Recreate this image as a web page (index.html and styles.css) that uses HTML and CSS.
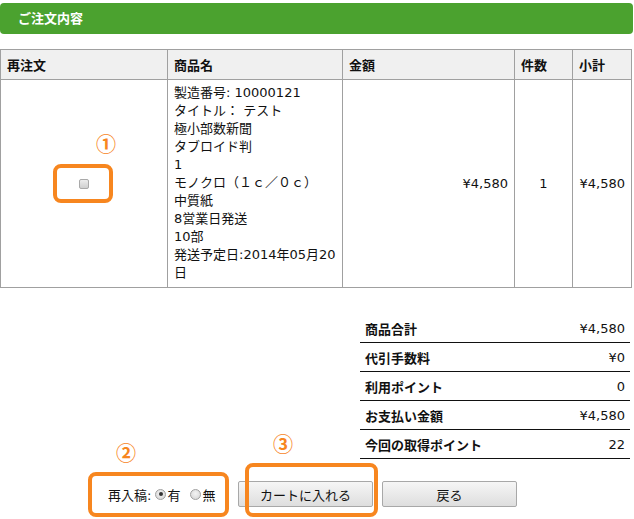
FILE: index.html
```html
<!DOCTYPE html>
<html lang="ja">
<head>
<meta charset="utf-8">
<link rel="stylesheet" href="styles.css">
</head>
<body>
<div class="bar">ご注文内容</div>

<table class="order">
  <colgroup>
    <col class="c1"><col class="c2"><col class="c3"><col class="c4"><col class="c5">
  </colgroup>
  <thead>
    <tr><th>再注文</th><th>商品名</th><th>金額</th><th>件数</th><th>小計</th></tr>
  </thead>
  <tbody>
    <tr>
      <td class="center"><input type="checkbox" class="chk"></td>
      <td class="name">製造番号: 10000121<br>タイトル： テスト<br>極小部数新聞<br>タブロイド判<br>1<br>モノクロ（１ｃ／０ｃ）<br>中質紙<br>8営業日発送<br>10部<br>発送予定日:2014年05月20日</td>
      <td class="right">¥4,580</td>
      <td class="center">1</td>
      <td class="right">¥4,580</td>
    </tr>
  </tbody>
</table>

<table class="summary">
  <tr><th>商品合計</th><td>¥4,580</td></tr>
  <tr><th>代引手数料</th><td>¥0</td></tr>
  <tr><th>利用ポイント</th><td>0</td></tr>
  <tr><th>お支払い金額</th><td>¥4,580</td></tr>
  <tr><th>今回の取得ポイント</th><td>22</td></tr>
</table>

<div class="actions">
  <div class="reupload">
    <span>再入稿:</span>
    <label><input type="radio" class="radio" name="re" checked>有</label>
    <label><input type="radio" class="radio" name="re">無</label>
  </div>
  <button class="btn">カートに入れる</button>
  <button class="btn">戻る</button>
</div>

<div class="note n1">①</div>
<div class="frame f1"></div>
<div class="note n2">②</div>
<div class="frame f2"></div>
<div class="note n3">③</div>
<div class="frame f3"></div>
</body>
</html>
```

FILE: styles.css
```css
html, body {
  margin: 0;
  padding: 0;
  background: #fff;
}
body {
  position: relative;
  width: 634px;
  height: 519px;
  overflow: hidden;
  padding-top: 3px;
  box-sizing: border-box;
  font-family: "DejaVu Sans", "Noto Sans CJK JP", sans-serif;
  font-size: 13px;
  color: #111;
}
.bar {
  width: 633px;
  height: 31px;
  box-sizing: border-box;
  background: #4ba22f;
  border-radius: 4px;
  color: #fff;
  font-weight: bold;
  font-size: 13px;
  line-height: 31px;
  padding-left: 18px;
}
.order {
  margin-top: 15px;
  border-collapse: collapse;
  table-layout: fixed;
  width: 631px;
}
.c1 { width: 167px; }
.c2 { width: 175px; }
.c3 { width: 172px; }
.c4 { width: 58px; }
.c5 { width: 59px; }
.order th, .order td {
  border: 1px solid #a0a0a0;
  padding: 0 6px;
}
.order th {
  background: #f0f0f0;
  text-align: left;
  font-weight: bold;
  height: 29px;
}
.order td {
  vertical-align: middle;
  line-height: 18px;
}
.order td.name {
  padding: 4px 6px 5px 6px;
  text-align: left;
}
.center { text-align: center; }
.right { text-align: right; }
.chk {
  -webkit-appearance: none;
  appearance: none;
  display: inline-block;
  width: 10px;
  height: 10px;
  margin: 0;
  border: 1px solid #a9a9a9;
  border-radius: 2px;
  background: linear-gradient(#ececec, #cfcfcf);
  vertical-align: middle;
  box-sizing: border-box;
}
.summary {
  margin: 26px 4px 0 auto;
  width: 270px;
  border-collapse: collapse;
}
.summary th, .summary td {
  height: 28px;
  border-bottom: 1px solid #111;
  padding: 0 5px;
}
.summary th {
  text-align: left;
  font-weight: bold;
}
.summary td {
  text-align: right;
}
.actions {
  margin-top: 22px;
  display: flex;
  align-items: center;
  padding-left: 108px;
  gap: 9px;
}
.reupload {
  display: flex;
  align-items: center;
  gap: 4px;
  width: 121px;
}
.reupload label {
  display: flex;
  align-items: center;
  margin-right: 6px;
}
.radio {
  -webkit-appearance: none;
  appearance: none;
  position: relative;
  width: 11px;
  height: 11px;
  margin: 0 1px 0 0;
  border: 1px solid #a0a0a0;
  border-radius: 50%;
  background: radial-gradient(circle at 50% 40%, #f4f4f4, #d2d2d2);
  box-sizing: border-box;
}
.radio:checked::after {
  content: "";
  position: absolute;
  left: 2.5px;
  top: 2.5px;
  width: 4px;
  height: 4px;
  border-radius: 50%;
  background: #333;
}
.btn {
  width: 135px;
  height: 26px;
  border: 1px solid #a8a8a8;
  border-radius: 2px;
  background: linear-gradient(#f6f6f6, #dedede);
  font-family: "Noto Sans CJK JP", sans-serif;
  font-size: 13px;
  color: #111;
  padding: 0;
}
.note {
  position: absolute;
  color: #f7861f;
  font-family: "Noto Sans CJK JP", sans-serif;
  font-size: 20px;
  line-height: 20px;
  font-weight: bold;
}
.frame {
  position: absolute;
  border: 4px solid #f7861f;
  border-radius: 8px;
  box-sizing: border-box;
}
.n1 { left: 96px; top: 134px; }
.f1 { left: 53px; top: 164px; width: 60px; height: 39px; }
.n2 { left: 116px; top: 443px; }
.f2 { left: 88px; top: 472px; width: 141px; height: 45px; }
.n3 { left: 273px; top: 434px; }
.f3 { left: 245px; top: 463px; width: 133px; height: 54px; }
```
